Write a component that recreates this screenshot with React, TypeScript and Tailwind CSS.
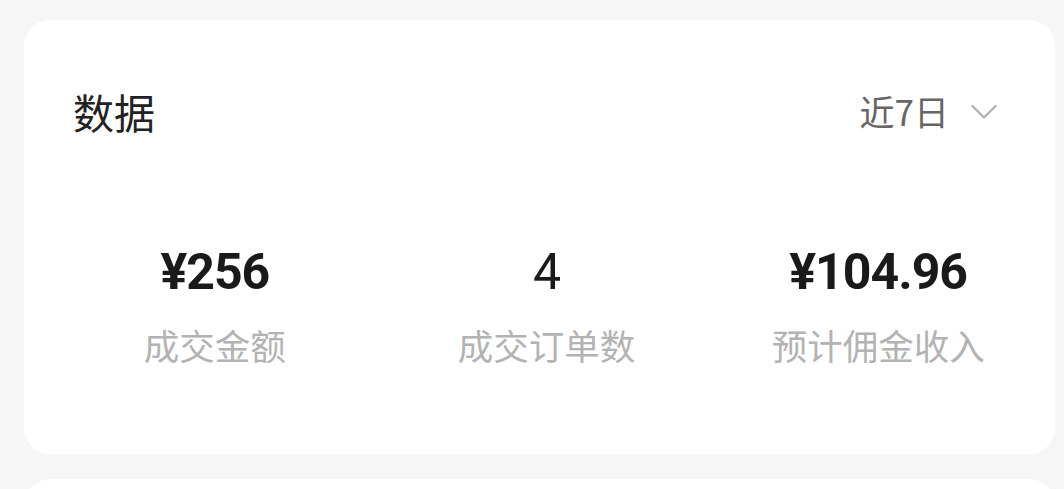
const stats = [
    { value: "¥256", label: "成交金额", bold: true },
    { value: "4", label: "成交订单数", bold: false },
    { value: "¥104.96", label: "预计佣金收入", bold: true },
];

const cjk = "font-['Noto_Sans_CJK_SC','Noto_Sans',sans-serif]";

export default function App() {
    return (
        <div className="h-[489px] w-[1064px] overflow-hidden bg-[#f6f6f6] pt-[20px] pl-[24px] pr-[9px]">
            {/* Data card */}
            <div className="h-[434px] rounded-[26px] bg-white">
                {/* Header */}
                <div className="flex items-center justify-between pl-[49px] pr-[58px] pt-[69px]">
                    <h2 className={`${cjk} text-[41px] leading-[44px] text-[#222]`}>
                        数据
                    </h2>
                    <button className="flex items-center gap-[22px]">
                        <span className={`${cjk} text-[35px] leading-[44px] text-[#666]`}>
                            近7日
                        </span>
                        <svg width="26" height="16" viewBox="0 0 26 16" fill="none" className="mt-[1px]">
                            <path d="M1.5 2 L13 13.5 L24.5 2" stroke="#b0b0b0" strokeWidth="2.2" strokeLinecap="round" strokeLinejoin="round" />
                        </svg>
                    </button>
                </div>

                {/* Stats */}
                <div className="mt-[111px] grid grid-cols-3 pl-[25px] pr-[11px]">
                    {stats.map((s) => (
                        <div key={s.label} className="flex flex-col items-center">
                            <span
                                className={`font-['Roboto',sans-serif] text-[50px] leading-[56px] tracking-[-1px] text-[#1a1a1a] ${s.bold ? "font-bold" : "font-normal"}`}
                            >
                                {s.value}
                            </span>
                            <span className={`${cjk} mt-[21px] text-[35.5px] leading-[48px] text-[#b3b3b3]`}>
                                {s.label}
                            </span>
                        </div>
                    ))}
                </div>
            </div>

            {/* Next card */}
            <div className="mt-[25px] h-[40px] rounded-t-[26px] bg-white" />
        </div>
    );
}
